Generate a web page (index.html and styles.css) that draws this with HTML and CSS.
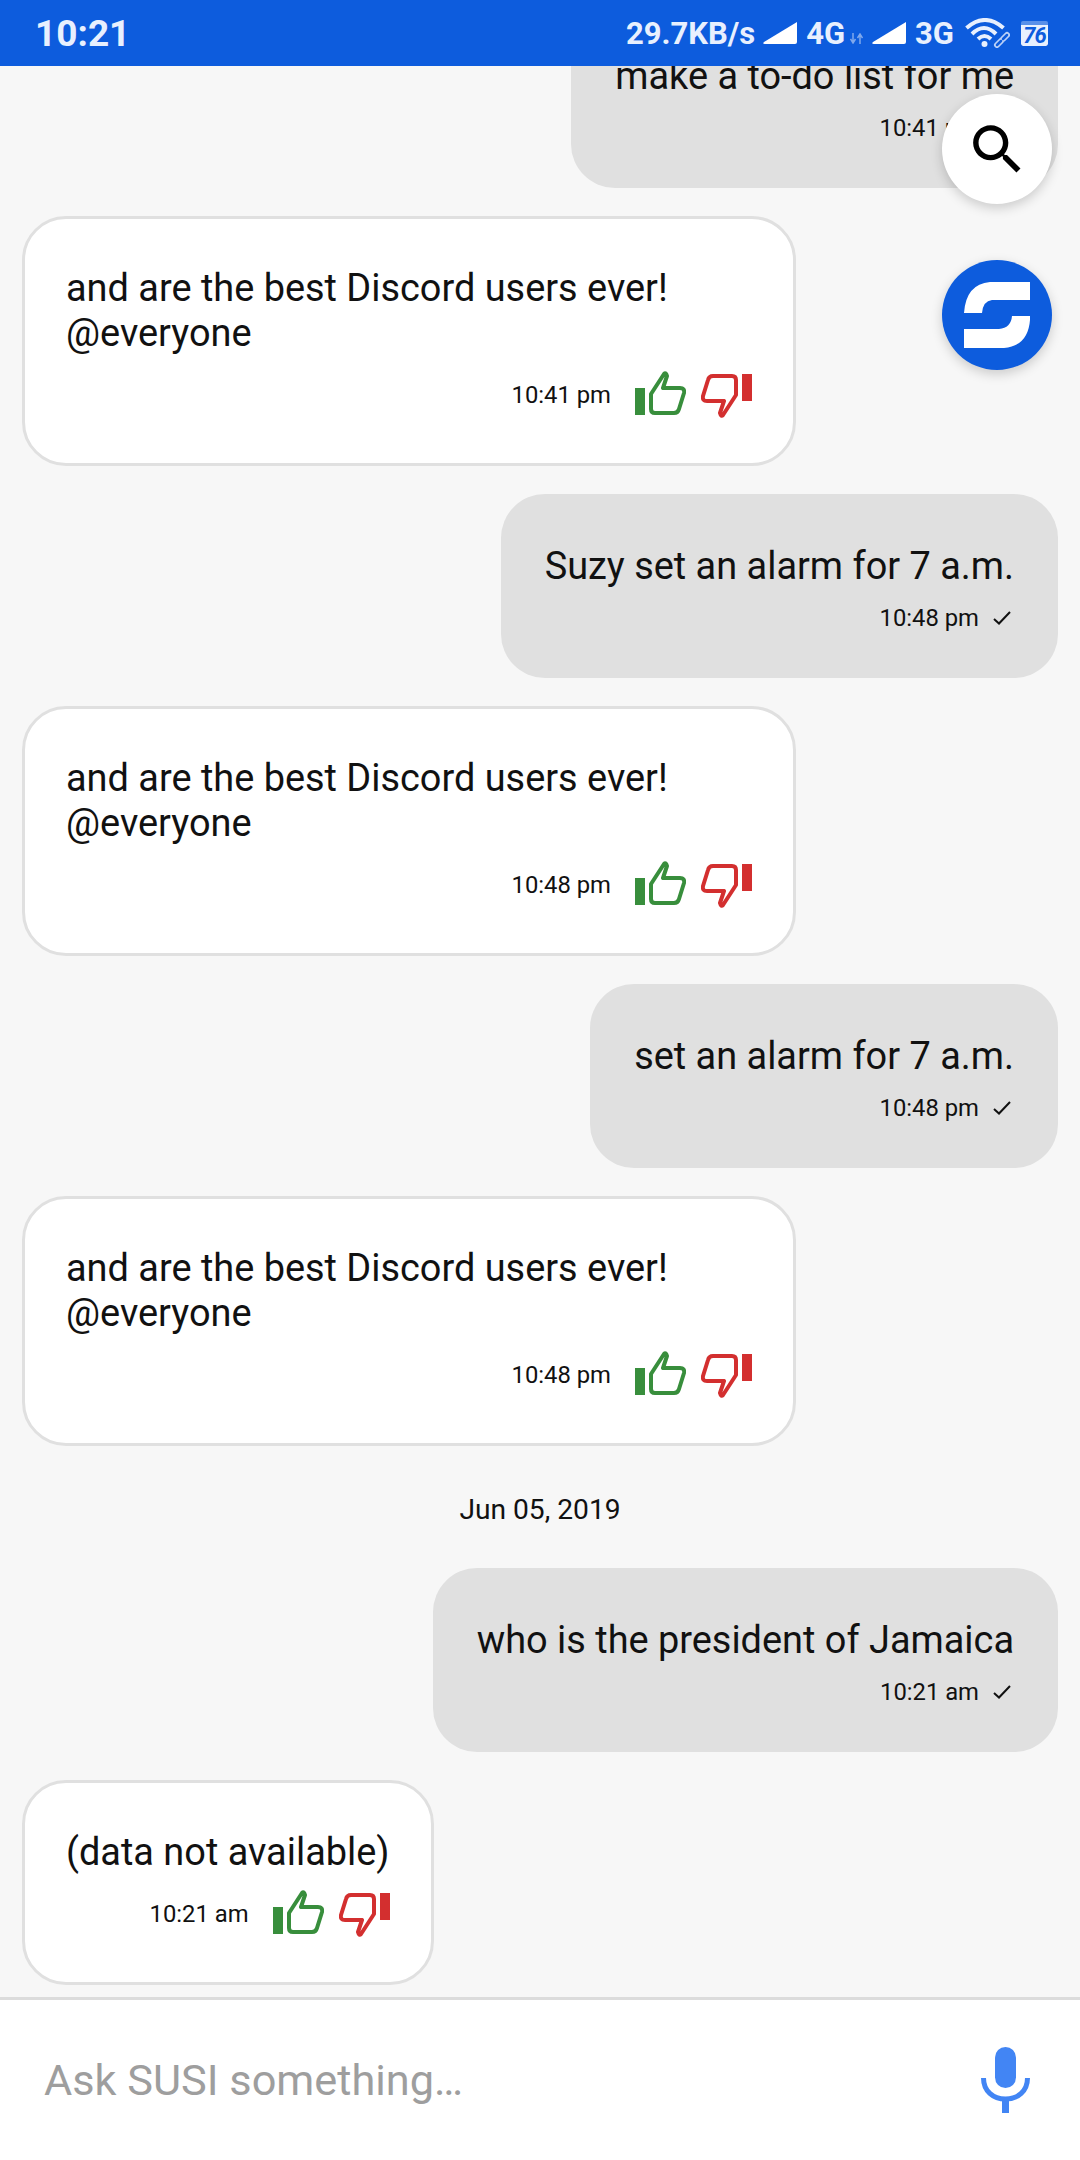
FILE: index.html
```html
<!DOCTYPE html>
<html lang="en">
<head>
    <meta charset="UTF-8">
    <meta name="viewport" content="width=device-width, initial-scale=1.0">
    <title>SUSI Chat</title>
    <link rel="stylesheet" href="styles.css">
</head>
<body>
    <svg class="defs" width="0" height="0">
        <symbol id="thumb" viewBox="0 0 51 45">
            <rect x="0" y="18" width="10" height="27" fill="currentColor"/>
            <path d="M16 24 L29 4 Q31 2 32 6 L28 18 H45 Q50 18 49 23 L44 39 Q43 43 39 43 H20 Q16 43 16 39 Z" fill="none" stroke="currentColor" stroke-width="4" stroke-linejoin="round"/>
        </symbol>
        <symbol id="tick" viewBox="0 0 18 14">
            <path d="M1 8 L6 12.5 L17 1" fill="none" stroke="currentColor" stroke-width="2"/>
        </symbol>
        <symbol id="signal" viewBox="0 0 34 22">
            <path d="M34 0 V20 Q34 22 32 22 H2 Q-1 22 1 20 Z" fill="currentColor"/>
        </symbol>
    </svg>

    <div class="screen">
        <!-- Статус-бар -->
        <div class="status-bar">
            <span class="clock">10:21</span>
            <div class="status-right">
                <span class="speed">29.7KB/s</span>
                <svg class="signal"><use href="#signal"/></svg>
                <span class="net">4G</span>
                <svg class="arrows" viewBox="0 0 13 11">
                    <path d="M3 0 V8 M0.5 6 L3 10 L5.5 6 M10 11 V3 M7.5 5 L10 1 L12.5 5" fill="none" stroke="currentColor" stroke-width="1.5"/>
                </svg>
                <svg class="signal second"><use href="#signal"/></svg>
                <span class="net">3G</span>
                <svg class="wifi" viewBox="0 0 46 30">
                    <path d="M2.5 10 Q21 -6 39.5 10 M8 16 Q20 4 32 16 M14 21 Q20.500 15 27 21" fill="none" stroke="currentColor" stroke-width="4"/>
                    <circle cx="20.500" cy="26" r="3" fill="currentColor"/>
                    <path d="M33 27 L37 23 M39 21 L43 17" fill="none" stroke="#bcd2f7" stroke-width="6" stroke-linecap="round"/>
                    <path d="M33 27 L37 23 M39 21 L43 17" fill="none" stroke="#0d5cdd" stroke-width="2.500" stroke-linecap="round"/>
                </svg>
                <span class="battery">76</span>
            </div>
        </div>

        <!-- Лента сообщений -->
        <div class="chat">
            <div class="msg msg-user">
                <p>make a to-do list for me</p>
                <div class="meta"><span>10:41 pm</span><svg class="tick"><use href="#tick"/></svg></div>
            </div>
            <div class="msg msg-bot">
                <p>and are the best Discord users ever! @everyone</p>
                <div class="meta">
                    <span>10:41 pm</span>
                    <svg class="thumb up"><use href="#thumb"/></svg>
                    <svg class="thumb down"><use href="#thumb"/></svg>
                </div>
            </div>
            <div class="msg msg-user">
                <p>Suzy set an alarm for 7 a.m.</p>
                <div class="meta"><span>10:48 pm</span><svg class="tick"><use href="#tick"/></svg></div>
            </div>
            <div class="msg msg-bot">
                <p>and are the best Discord users ever! @everyone</p>
                <div class="meta">
                    <span>10:48 pm</span>
                    <svg class="thumb up"><use href="#thumb"/></svg>
                    <svg class="thumb down"><use href="#thumb"/></svg>
                </div>
            </div>
            <div class="msg msg-user">
                <p>set an alarm for 7 a.m.</p>
                <div class="meta"><span>10:48 pm</span><svg class="tick"><use href="#tick"/></svg></div>
            </div>
            <div class="msg msg-bot">
                <p>and are the best Discord users ever! @everyone</p>
                <div class="meta">
                    <span>10:48 pm</span>
                    <svg class="thumb up"><use href="#thumb"/></svg>
                    <svg class="thumb down"><use href="#thumb"/></svg>
                </div>
            </div>
            <div class="date">Jun 05, 2019</div>
            <div class="msg msg-user">
                <p>who is the president of Jamaica</p>
                <div class="meta"><span>10:21 am</span><svg class="tick"><use href="#tick"/></svg></div>
            </div>
            <div class="msg msg-bot">
                <p>(data not available)</p>
                <div class="meta">
                    <span>10:21 am</span>
                    <svg class="thumb up"><use href="#thumb"/></svg>
                    <svg class="thumb down"><use href="#thumb"/></svg>
                </div>
            </div>
        </div>

        <!-- Плавающие кнопки -->
        <div class="fabs">
            <div class="fab fab-search">
                <svg viewBox="0 0 24 24" width="65" height="65">
                    <path d="M15.5 14h-.79l-.28-.27C15.41 12.59 16 11.11 16 9.5 16 5.91 13.09 3 9.5 3S3 5.91 3 9.5 5.91 16 9.5 16c1.61 0 3.09-.59 4.23-1.57l.27.28v.79l5 4.99L20.49 19l-4.99-5zm-6 0C7.01 14 5 11.99 5 9.5S7.01 5 9.5 5 14 7.01 14 9.5 11.99 14 9.5 14z" fill="#000"/>
                </svg>
            </div>
            <div class="fab fab-logo">
                <svg viewBox="0 0 110 110" width="110" height="110">
                    <path d="M22 53 Q24 24 48 22 H88 V40 H50 Q41 41 40 53 Z M88 56 H70 Q69 68 57 69 H22 V88 H62 Q86 86 88 60 Z" fill="#fff"/>
                </svg>
            </div>
        </div>

        <!-- Поле ввода -->
        <div class="composer">
            <span class="placeholder">Ask SUSI something…</span>
            <svg class="mic" viewBox="0 0 49 66">
                <rect x="14" y="0" width="21" height="41" rx="10.5" fill="#4285f4"/>
                <path d="M2.5 31 C2.5 44 12 52 24.5 52 C37 52 46.5 44 46.5 31" fill="none" stroke="#4285f4" stroke-width="5"/>
                <rect x="21" y="50" width="7" height="16" fill="#4285f4"/>
            </svg>
        </div>
    </div>
</body>
</html>
```
FILE: styles.css
```css
* {
    margin: 0;
    padding: 0;
    box-sizing: border-box;
}

body {
    font-family: Roboto, "Liberation Sans", sans-serif;
    background: #f7f7f7;
    color: #111;
}

.defs {
    position: absolute;
}

.screen {
    width: 1080px;
    height: 2160px;
    display: flex;
    flex-direction: column;
    position: relative;
    overflow: hidden;
}

.status-bar {
    height: 66px;
    flex-shrink: 0;
    background: #0d5cdd;
    color: #e8f0fe;
    display: flex;
    align-items: center;
    justify-content: space-between;
    padding: 0 32px 0 35px;
    font-weight: 700;
    position: relative;
    z-index: 1;
}

.clock {
    font-size: 37px;
}

.status-right {
    display: flex;
    align-items: center;
    font-size: 31px;
}

.signal {
    width: 34px;
    height: 22px;
    margin: 0 9px 0 8px;
    color: #fff;
}

.signal.second {
    margin-left: 9px;
}

.arrows {
    width: 13px;
    height: 11px;
    margin: 10px 0 0 5px;
    color: #7fa8ec;
}

.wifi {
    width: 46px;
    height: 30px;
    margin-left: 10px;
    color: #e8f0fe;
}

.battery {
    width: 27px;
    height: 25px;
    margin-left: 11px;
    background: #e8f0fe;
    background-clip: padding-box;
    border-top: 4px solid rgba(232,240,254,0.35);
    color: #0d5cdd;
    border-radius: 2px;
    font-size: 22px;
    line-height: 21px;
    text-align: center;
    font-style: italic;
    letter-spacing: -1px;
}

.chat {
    flex: 1;
    min-height: 0;
    overflow: hidden;
    display: flex;
    flex-direction: column;
    justify-content: flex-end;
    gap: 28px;
    padding: 0 22px 12px;
}

.msg {
    flex-shrink: 0;
    max-width: 774px;
    border-radius: 44px;
    font-size: 37.9px;
    line-height: 45px;
}

.msg-user {
    align-self: flex-end;
    background: #e0e0e0;
    padding: 50px 44px 45px;
}

.msg-bot {
    align-self: flex-start;
    background: #fff;
    border: 3px solid #e0e0e0;
    padding: 47px 41px 48px;
}

.meta {
    display: flex;
    align-items: center;
    justify-content: flex-end;
    font-size: 23.8px;
    line-height: 30px;
    margin-top: 14px;
}

.msg-bot .meta {
    align-items: flex-start;
    height: 45px;
}

.msg-bot .meta span {
    margin-top: 10px;
}

.tick {
    width: 18px;
    height: 14px;
    margin: 0 3px 0 14px;
}

.thumb {
    width: 51px;
    height: 45px;
    flex-shrink: 0;
}

.thumb.up {
    color: #388e3c;
    margin-left: 24px;
}

.thumb.down {
    color: #d32f2f;
    margin: 4px 0 0 15px;
    transform: rotate(180deg);
}

.date {
    flex-shrink: 0;
    text-align: center;
    font-size: 28.2px;
    line-height: 36px;
    margin: 18px 0 12px;
}

.fabs {
    position: absolute;
    top: 94px;
    right: 28px;
    display: flex;
    flex-direction: column;
    gap: 56px;
}

.fab {
    width: 110px;
    height: 110px;
    border-radius: 50%;
    display: flex;
    align-items: center;
    justify-content: center;
    box-shadow: 0 4px 12px rgba(0,0,0,0.18);
}

.fab-search {
    background: #fff;
}

.fab-logo {
    background: #0d5cdd;
}

.composer {
    height: 163px;
    flex-shrink: 0;
    background: #fff;
    border-top: 3px solid #dcdcdc;
    display: flex;
    align-items: center;
    justify-content: space-between;
    padding: 0 50px 0 44px;
}

.placeholder {
    font-size: 43.3px;
    color: #9e9e9e;
}

.mic {
    width: 49px;
    height: 66px;
}
```
